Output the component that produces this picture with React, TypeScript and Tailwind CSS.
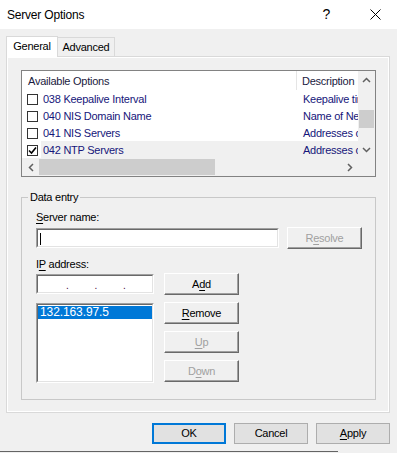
import React from "react";

const U = ({ children }: { children: React.ReactNode }) => <span className="underline underline-offset-2">{children}</span>;

function RaisedBtn({ w, h, disabled, children }: { w: number; h: number; disabled?: boolean; children: React.ReactNode }) {
  return (
    <div
      className={`flex items-center justify-center bg-[#f0f0f0] border-t border-l border-t-white border-l-white border-r border-b border-r-[#696969] border-b-[#696969] shadow-[inset_-1px_-1px_0_#a0a0a0] ${disabled ? "text-[#a0a0a0]" : "text-black"}`}
      style={{ width: w, height: h }}
    >
      {children}
    </div>
  );
}

function Sunken({ className, children }: { className: string; children?: React.ReactNode }) {
  return (
    <div className={`border-t border-l border-t-[#a0a0a0] border-l-[#a0a0a0] border-r border-b border-r-white border-b-white ${className}`}>
      <div className="h-full w-full border-t border-l border-t-[#696969] border-l-[#696969] border-r border-b border-r-[#e3e3e3] border-b-[#e3e3e3] bg-white relative">
        {children}
      </div>
    </div>
  );
}

function Check({ checked }: { checked?: boolean }) {
  return (
    <div className="w-[11px] h-[11px] border border-[#333] bg-white flex items-center justify-center shrink-0">
      {checked && (
        <svg width="9" height="9" viewBox="0 0 9 9">
          <path d="M1 4.5 L3.5 7 L8 1.5" fill="none" stroke="#000" strokeWidth="1.6" />
        </svg>
      )}
    </div>
  );
}

const rows = [
  { name: "038 Keepalive Interval", desc: "Keepalive time interval" },
  { name: "040 NIS Domain Name", desc: "Name of Network Information Service domain" },
  { name: "041 NIS Servers", desc: "Addresses of NIS servers" },
  { name: "042 NTP Servers", desc: "Addresses of Network Time Protocol servers", checked: true, sel: true },
];

export default function App() {
  return (
    <div className="w-[397px] h-[453px] bg-[#f0f0f0] font-['Liberation_Sans',Arial,sans-serif] text-[11px] tracking-[-0.25px] text-black relative overflow-hidden">
      {/* title bar */}
      <div className="h-[29px] bg-white flex items-center pl-[7px]">
        <span className="text-[12px] tracking-[-0.2px] text-black">Server Options</span>
        <span className="ml-auto mr-[40px] text-[14px] text-black">?</span>
        <svg width="11" height="11" viewBox="0 0 11 11" className="mr-[16px]">
          <path d="M0.5 0.5 L10.5 10.5 M10.5 0.5 L0.5 10.5" stroke="#000" strokeWidth="1" />
        </svg>
      </div>

      {/* tabs */}
      <div className="flex items-end pl-[6px] pt-[6px] h-[27px]">
        <div className="h-[21px] w-[52px] bg-white border border-[#d9d9d9] border-b-0 flex items-center justify-center pb-[2px] relative z-10 -mb-px">
          General
        </div>
        <div className="h-[19px] w-[57px] border border-[#d9d9d9] border-l-0 border-b-0 flex items-center justify-center">
          Advanced
        </div>
      </div>

      {/* panel */}
      <div className="mx-[6px] w-[384px] h-[357px] border border-[#d9d9d9] bg-[#f0f0f0]">
        <div className="h-full w-full border border-white px-[13px] pt-[12px]">
          {/* list view */}
          <div className="w-[355px] h-[107px] border border-[#828282] bg-white flex flex-col">
            <div className="flex h-[87px]">
              <div className="w-[337px] flex flex-col overflow-hidden">
                <div className="h-[19px] shrink-0 flex text-[#1a1a40]">
                  <div className="w-[275px] shrink-0 pl-[6px] pt-[2px] border-r border-[#e5e5e5]">Available Options</div>
                  <div className="flex-1 min-w-0 pl-[5px] pt-[2px] whitespace-nowrap overflow-hidden">Description</div>
                </div>
                {rows.map((r) => (
                  <div key={r.name} className="h-[17px] shrink-0 w-[337px] flex items-center overflow-hidden">
                    <div className="w-[19px] shrink-0 pl-[5px] pt-[1px] flex items-center">
                      <Check checked={r.checked} />
                    </div>
                    <div className={`flex-1 min-w-0 h-full flex items-center pt-[1px] overflow-hidden ${r.sel ? "bg-[#f0f0f0]" : ""}`}>
                      <div className="w-[256px] shrink-0 pl-[2px] text-[#16167a] whitespace-nowrap">{r.name}</div>
                      <div className="flex-1 min-w-0 pl-[6px] text-[#16167a] whitespace-nowrap overflow-hidden">{r.desc}</div>
                    </div>
                  </div>
                ))}
              </div>
              {/* vertical scrollbar */}
              <div className="w-[17px] shrink-0 bg-[#f0f0f0] flex flex-col items-center">
                <div className="h-[17px] flex items-center justify-center">
                  <svg width="9" height="6" viewBox="0 0 9 6"><path d="M1 5 L4.5 1.5 L8 5" fill="none" stroke="#606060" strokeWidth="1.5" /></svg>
                </div>
                <div className="h-[22px]" />
                <div className="h-[18px] w-[15px] bg-[#cdcdcd]" />
                <div className="flex-1" />
                <div className="h-[17px] flex items-center justify-center">
                  <svg width="9" height="6" viewBox="0 0 9 6"><path d="M1 1 L4.5 4.5 L8 1" fill="none" stroke="#606060" strokeWidth="1.5" /></svg>
                </div>
              </div>
            </div>
            {/* horizontal scrollbar */}
            <div className="flex h-[18px]">
              <div className="w-[337px] bg-[#f0f0f0] flex items-center">
                <div className="w-[17px] flex items-center justify-center">
                  <svg width="6" height="9" viewBox="0 0 6 9"><path d="M5 1 L1.5 4.5 L5 8" fill="none" stroke="#606060" strokeWidth="1.5" /></svg>
                </div>
                <div className="w-[176px] h-[16px] bg-[#cdcdcd]" />
                <div className="flex-1" />
                <div className="w-[17px] flex items-center justify-center">
                  <svg width="6" height="9" viewBox="0 0 6 9"><path d="M1 1 L4.5 4.5 L1 8" fill="none" stroke="#606060" strokeWidth="1.5" /></svg>
                </div>
              </div>
              <div className="w-[17px] bg-[#f0f0f0]" />
            </div>
          </div>

          {/* group box */}
          <div className="relative mt-[20px] w-[355px] h-[203px] border border-[#c8c8c8]">
            <div className="absolute left-[6px] -top-[8px] px-[2px] bg-[#f0f0f0] leading-[14px]">Data entry</div>
            <div className="pl-[14px] pt-[13px] flex flex-col">
              <div className="leading-[13px]"><U>S</U>erver name:</div>
              <div className="flex items-center mt-[3px] gap-[8px]">
                <Sunken className="w-[243px] h-[20px]">
                  <div className="absolute left-[2px] top-[3px] w-px h-[12px] bg-black" />
                </Sunken>
                <RaisedBtn w={75} h={22} disabled>
                  R<U>e</U>solve
                </RaisedBtn>
              </div>
              <div className="leading-[13px] mt-[9px]">I<U>P</U> address:</div>
              <div className="flex items-start mt-[2px] gap-[10px]">
                <Sunken className="w-[118px] h-[20px] mt-[1px]">
                  <div className="flex h-full items-end pb-[1px] text-[#4a0a3a] text-[10px] leading-[10px]">
                    <span className="ml-[28px]">.</span>
                    <span className="ml-[26px]">.</span>
                    <span className="ml-[26px]">.</span>
                  </div>
                </Sunken>
                <RaisedBtn w={75} h={22}>
                  A<U>d</U>d
                </RaisedBtn>
              </div>
              <div className="flex items-start mt-[7px] gap-[10px]">
                <Sunken className="w-[118px] h-[80px] mt-[1px]">
                  <div className="mt-[1px] h-[13px] bg-[#0078d7] text-white pl-[2px] leading-[13px] text-[12px] tracking-[-0.1px]">132.163.97.5</div>
                </Sunken>
                <div className="flex flex-col gap-[7px]">
                  <RaisedBtn w={75} h={22}>
                    <U>R</U>emove
                  </RaisedBtn>
                  <RaisedBtn w={75} h={22} disabled>
                    <U>U</U>p
                  </RaisedBtn>
                  <RaisedBtn w={75} h={22} disabled>
                    D<U>o</U>wn
                  </RaisedBtn>
                </div>
              </div>
            </div>
          </div>
        </div>
      </div>

      {/* bottom buttons */}
      <div className="flex justify-end gap-[8px] pr-[7px] mt-[10px]">
        <div className="w-[74px] h-[21px] bg-[#e1e1e1] border-2 border-[#0078d7] flex items-center justify-center">OK</div>
        <div className="w-[74px] h-[21px] bg-[#e1e1e1] border border-[#adadad] flex items-center justify-center">Cancel</div>
        <div className="w-[74px] h-[21px] bg-[#e1e1e1] border border-[#adadad] flex items-center justify-center">
          <U>A</U>pply
        </div>
      </div>
      <div className="absolute left-0 bottom-[1px] w-[338px] h-px bg-[#646464]" />
    </div>
  );
}
